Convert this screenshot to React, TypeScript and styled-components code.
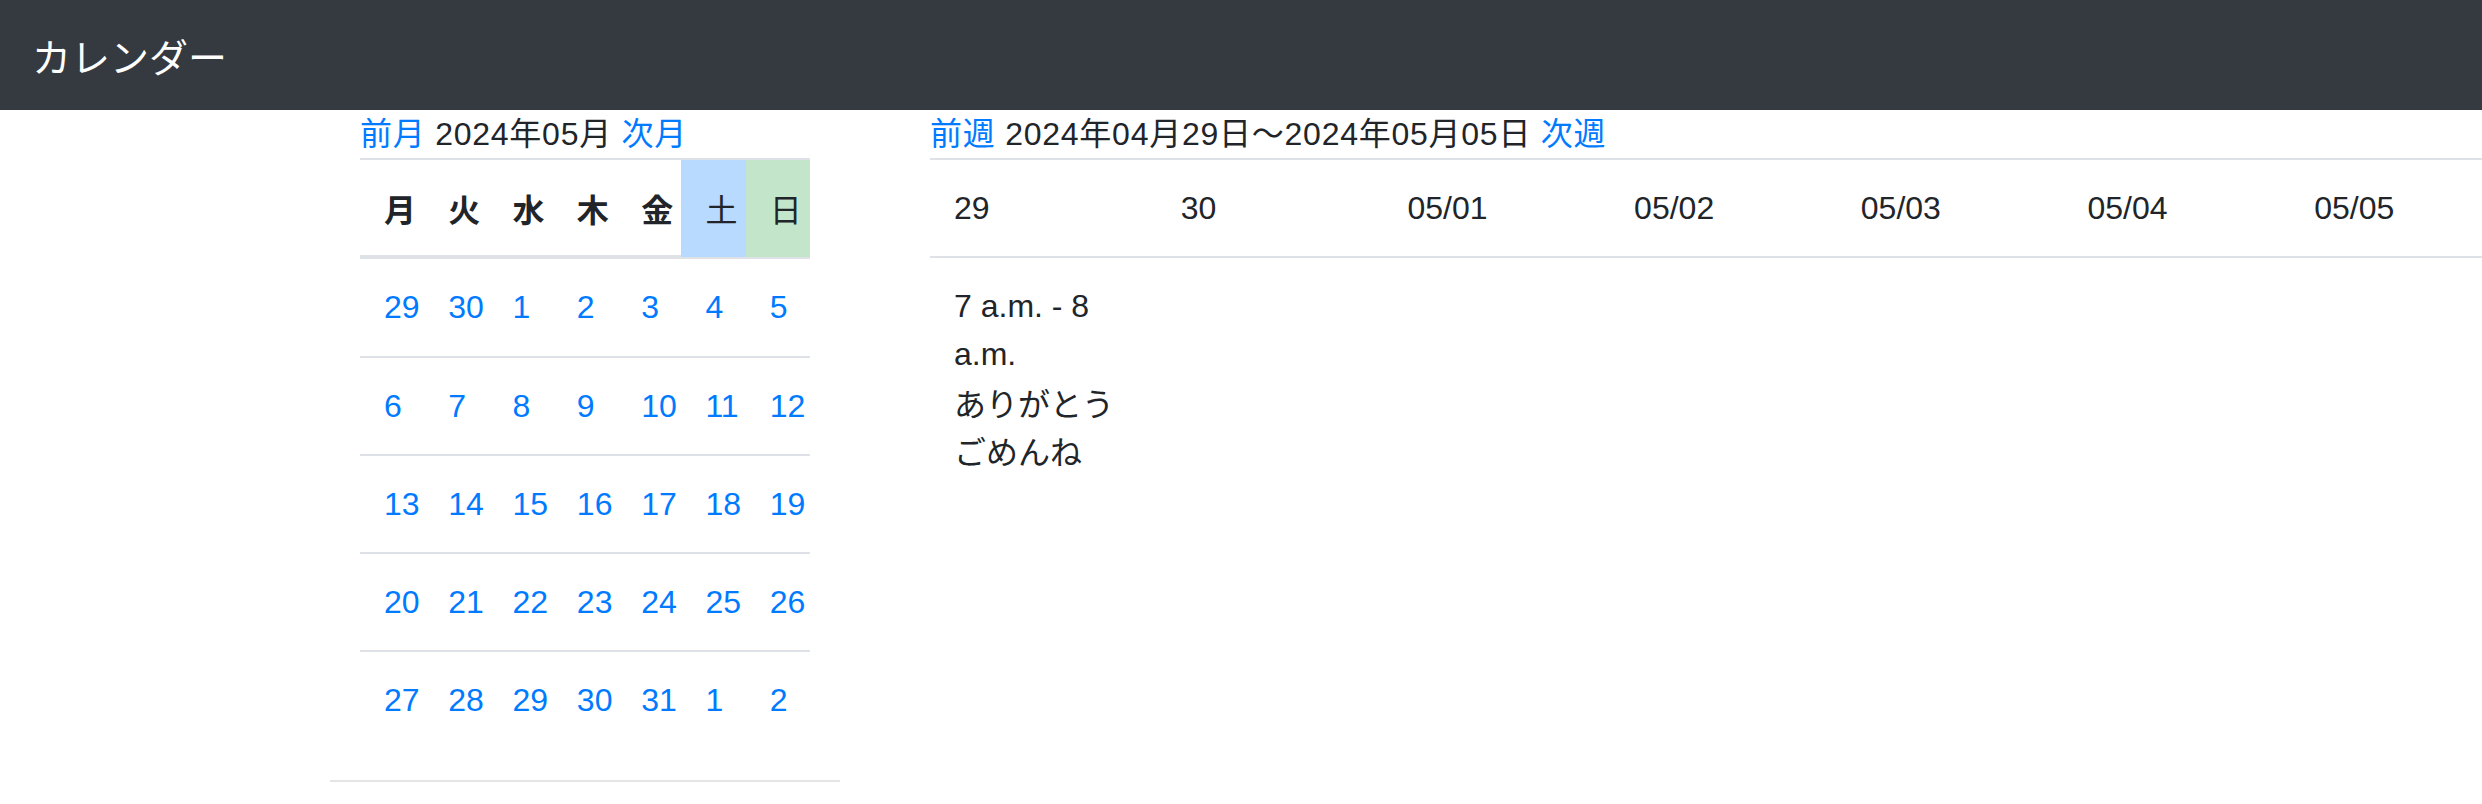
import React from 'react';
import styled, { createGlobalStyle } from 'styled-components';

const GlobalStyle = createGlobalStyle`
  html, body {
    margin: 0;
    padding: 0;
    background: #fff;
  }
  body {
    font-family: "Liberation Sans", "Noto Sans CJK JP", sans-serif;
    font-size: 32px;
    line-height: 48px;
    color: #212529;
    overflow: hidden;
  }
`;

const CJK = `"Noto Sans CJK JP", "Liberation Sans", sans-serif`;

const Navbar = styled.nav`
  height: 110px;
  box-sizing: border-box;
  background: #343a40;
  display: flex;
  align-items: center;
  padding: 0 32px;
`;

const Brand = styled.span`
  color: #fff;
  font-family: ${CJK};
  font-size: 39px;
  line-height: 60px;
`;

const Main = styled.main`
  display: flex;
  align-items: flex-start;
  padding-left: 330px;
  overflow: hidden;
`;

const MonthColumn = styled.section`
  flex: 0 0 510px;
`;

const MonthInner = styled.div`
  padding: 0 30px;
`;

const WeekColumn = styled.section`
  flex: 0 0 auto;
  margin-left: 90px;
`;

// 見出し行（前月 / 次月 など）
const Caption = styled.div`
  height: 48px;
  white-space: nowrap;
  letter-spacing: 0.75px;
`;

const NavLink = styled.a`
  color: #007bff;
  text-decoration: none;
  cursor: pointer;
`;

const MonthTable = styled.table`
  width: 450px;
  table-layout: fixed;
  border-collapse: separate;
  border-spacing: 0;
  margin-bottom: 32px;
`;

const DayHead = styled.th<{ $tone?: 'sat' | 'sun' }>`
  font-family: ${CJK};
  font-weight: ${(p) => (p.$tone ? 400 : 700)};
  text-align: left;
  height: 48px;
  line-height: 48px;
  padding: 24px 0 ${(p) => (p.$tone ? '25px' : '23px')} 24px;
  border-top: 2px solid #dee2e6;
  border-bottom: ${(p) => (p.$tone ? '2px' : '4px')} solid #dee2e6;
  background: ${(p) =>
    p.$tone === 'sat' ? '#b8daff' : p.$tone === 'sun' ? '#c3e6cb' : 'transparent'};
`;

const DateCell = styled.td<{ $first?: boolean }>`
  height: ${(p) => (p.$first ? '49px' : '48px')};
  line-height: 48px;
  padding: 24px 0 24px 24px;
  border-top: ${(p) => (p.$first ? 'none' : '2px solid #dee2e6')};
  white-space: nowrap;
  vertical-align: top;
  color: #007bff;
`;

const Divider = styled.hr`
  height: 0;
  margin: 0;
  border: 0;
  border-top: 2px solid rgba(0, 0, 0, 0.1);
`;

const WeekTable = styled.table`
  width: 1587px;
  table-layout: fixed;
  border-collapse: separate;
  border-spacing: 0;
`;

const WeekHead = styled.th`
  font-weight: 400;
  text-align: left;
  height: 48px;
  line-height: 48px;
  padding: 24px;
  border-top: 2px solid #dee2e6;
  border-bottom: 2px solid #dee2e6;
  white-space: nowrap;
`;

const WeekCell = styled.td`
  vertical-align: top;
  padding: 24px;
`;

const EventTime = styled.div`
  line-height: 48px;
`;

const EventText = styled.div`
  font-family: ${CJK};
  line-height: 48px;
`;

const dayNames = ['月', '火', '水', '木', '金', '土', '日'];

const weeks = [
  [29, 30, 1, 2, 3, 4, 5],
  [6, 7, 8, 9, 10, 11, 12],
  [13, 14, 15, 16, 17, 18, 19],
  [20, 21, 22, 23, 24, 25, 26],
  [27, 28, 29, 30, 31, 1, 2],
];

const weekDays = ['29', '30', '05/01', '05/02', '05/03', '05/04', '05/05'];

const events: Record<string, { time: string; title: string; note: string }[]> = {
  '29': [{ time: '7 a.m. - 8 a.m.', title: 'ありがとう', note: 'ごめんね' }],
};

const App = () => {
  return (
    <>
      <GlobalStyle />
      <Navbar>
        <Brand>カレンダー</Brand>
      </Navbar>
      <Main>
        <MonthColumn>
          <MonthInner>
            <Caption>
              <NavLink>前月</NavLink> 2024年05月 <NavLink>次月</NavLink>
            </Caption>
            <MonthTable>
              <thead>
                <tr>
                  {dayNames.map((d, i) => (
                    <DayHead key={d} $tone={i === 5 ? 'sat' : i === 6 ? 'sun' : undefined}>
                      {d}
                    </DayHead>
                  ))}
                </tr>
              </thead>
              <tbody>
                {weeks.map((w, wi) => (
                  <tr key={wi}>
                    {w.map((n, di) => (
                      <DateCell key={di} $first={wi === 0}>
                        {n}
                      </DateCell>
                    ))}
                  </tr>
                ))}
              </tbody>
            </MonthTable>
          </MonthInner>
          <Divider />
        </MonthColumn>
        <WeekColumn>
          <Caption>
            <NavLink>前週</NavLink> 2024年04月29日〜2024年05月05日 <NavLink>次週</NavLink>
          </Caption>
          <WeekTable>
            <thead>
              <tr>
                {weekDays.map((d) => (
                  <WeekHead key={d}>{d}</WeekHead>
                ))}
              </tr>
            </thead>
            <tbody>
              <tr>
                {weekDays.map((d) => (
                  <WeekCell key={d}>
                    {(events[d] || []).map((ev, i) => (
                      <div key={i}>
                        <EventTime>{ev.time}</EventTime>
                        <EventText>{ev.title}</EventText>
                        <EventText>{ev.note}</EventText>
                      </div>
                    ))}
                  </WeekCell>
                ))}
              </tr>
            </tbody>
          </WeekTable>
        </WeekColumn>
      </Main>
    </>
  );
};

export default App;
